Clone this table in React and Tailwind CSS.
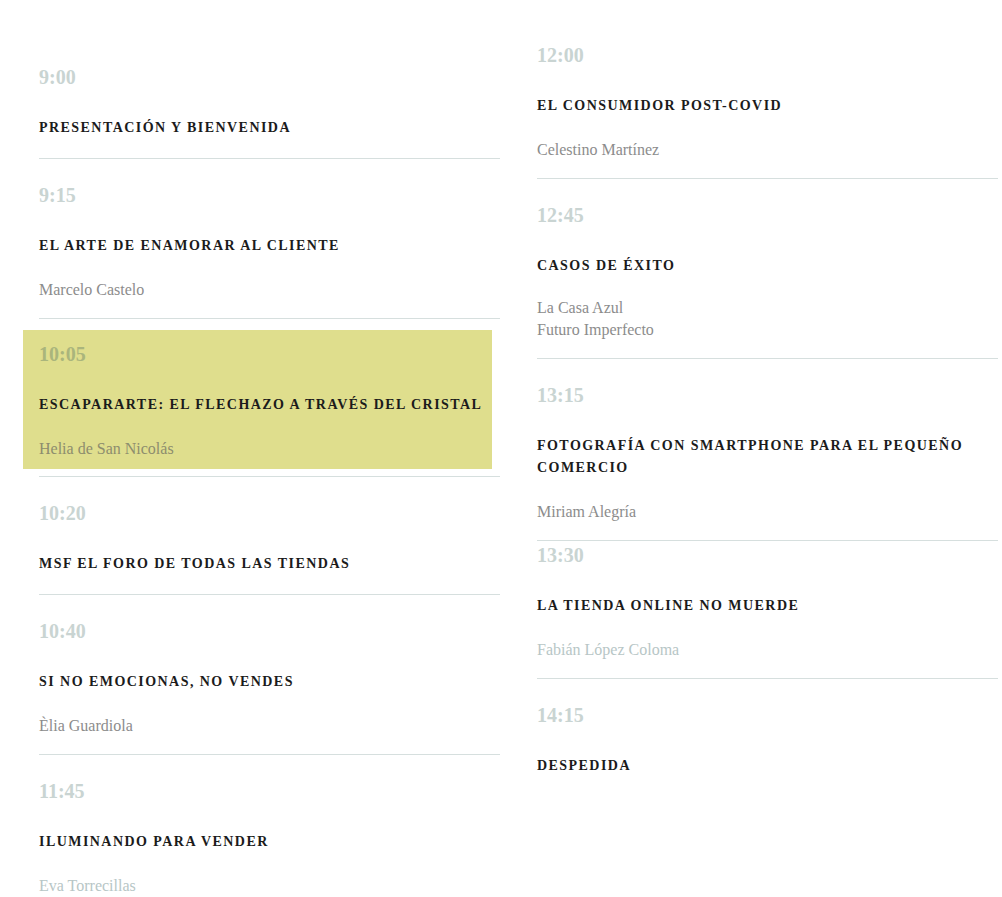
import React from 'react';

const left = [
  { time: '9:00', title: 'PRESENTACIÓN Y BIENVENIDA' },
  { time: '9:15', title: 'EL ARTE DE ENAMORAR AL CLIENTE', speakers: ['Marcelo Castelo'] },
  { time: '10:05', title: 'ESCAPARARTE: EL FLECHAZO A TRAVÉS DEL CRISTAL', speakers: ['Helia de San Nicolás'], active: true },
  { time: '10:20', title: 'MSF EL FORO DE TODAS LAS TIENDAS' },
  { time: '10:40', title: 'SI NO EMOCIONAS, NO VENDES', speakers: ['Èlia Guardiola'] },
  { time: '11:45', title: 'ILUMINANDO PARA VENDER', speakers: ['Eva Torrecillas'], link: true, last: true },
];

const right = [
  { time: '12:00', title: 'EL CONSUMIDOR POST-COVID', speakers: ['Celestino Martínez'] },
  { time: '12:45', title: 'CASOS DE ÉXITO', speakers: ['La Casa Azul', 'Futuro Imperfecto'] },
  { time: '13:15', title: 'FOTOGRAFÍA CON SMARTPHONE PARA EL PEQUEÑO COMERCIO', speakers: ['Miriam Alegría'] },
  { time: '13:30', title: 'LA TIENDA ONLINE NO MUERDE', speakers: ['Fabián López Coloma'], link: true, tight: true },
  { time: '14:15', title: 'DESPEDIDA', last: true },
];

function Body({ item }) {
  const many = item.speakers && item.speakers.length > 1;
  return (
    <>
      <div className={`text-[20px] leading-[24px] font-bold ${item.active ? 'text-[#aab57c]' : 'text-[#c9d4d2]'}`}>{item.time}</div>
      <div className="mt-[28px] text-[14px] leading-[22px] font-bold tracking-[1.45px] text-[#1b1b1b]">{item.title}</div>
      {item.speakers && (
        <div className={`${many ? 'mt-[20px]' : 'mt-[22px]'} text-[16px] leading-[22px] ${item.active ? 'text-[#8d8d6e]' : item.link ? 'text-[#b7c6c6]' : 'text-[#8c8c8c]'}`}>
          {item.speakers.map(s => <div key={s}>{s}</div>)}
        </div>
      )}
    </>
  );
}

function Item({ item }) {
  if (item.active) {
    return (
      <div className="pt-[11px] pb-[7px] border-b border-[#d6dfde]">
        <div className="-ml-4 mr-2 pl-4 pt-3 pb-[9px] bg-[#dfde8d]">
          <Body item={item} />
        </div>
      </div>
    );
  }
  return (
    <div className={`${item.tight ? 'pt-[2px]' : 'pt-6'} ${item.speakers ? 'pb-[17px]' : 'pb-[19px]'} ${item.last ? '' : 'border-b border-[#d6dfde]'}`}>
      <Body item={item} />
    </div>
  );
}

export default function App() {
  return (
    <div className="min-h-screen bg-white" style={{ fontFamily: '"Liberation Serif", "DejaVu Serif", serif' }}>
      <div className="grid grid-cols-[461px_461px] gap-x-[37px] pl-[39px]">
        <div className="pt-[41px]">
          {left.map(it => <Item key={it.time} item={it} />)}
        </div>
        <div className="pt-[19px]">
          {right.map(it => <Item key={it.time} item={it} />)}
        </div>
      </div>
    </div>
  );
}
